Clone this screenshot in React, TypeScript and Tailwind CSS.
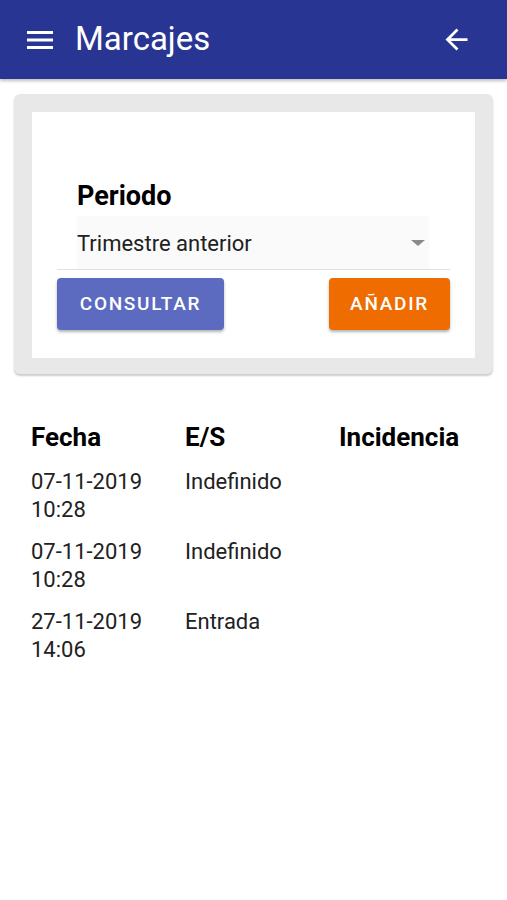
import React from "react";

const rows = [
  { date: "07-11-2019", time: "10:28", es: "Indefinido", inc: "" },
  { date: "07-11-2019", time: "10:28", es: "Indefinido", inc: "" },
  { date: "27-11-2019", time: "14:06", es: "Entrada", inc: "" },
];

const App = () => {
  return (
    <div className="min-h-[900px] bg-white font-['Roboto',sans-serif]">
      {/* header */}
      <div className="h-[79px] bg-[#283593] flex items-center pl-[27px] pr-[34px] shadow-[0_2px_3px_rgba(0,0,0,0.25)]">
        <svg width="26" height="20" viewBox="0 0 26 20" className="shrink-0">
          <rect x="0" y="1" width="26" height="3" fill="white" />
          <rect x="0" y="8.5" width="26" height="3" fill="white" />
          <rect x="0" y="16" width="26" height="3" fill="white" />
        </svg>
        <h1 className="ml-[22px] text-white text-[33px] leading-none pb-[2px]">Marcajes</h1>
        <svg width="33" height="33" viewBox="0 0 24 24" className="ml-auto">
          <path d="M20 11H7.83l5.59-5.59L12 4l-8 8 8 8 1.41-1.41L7.83 13H20v-2z" fill="white" />
        </svg>
      </div>

      {/* filter card */}
      <div className="mx-[14px] mt-[15px] bg-[#e8e8e8] rounded-[6px] p-[18px] pb-[16px] shadow-[0_2px_2px_rgba(0,0,0,0.2)]">
        <div className="bg-white h-[246px] px-[25px] pt-[71px]">
          <div className="text-[27px] font-bold text-black leading-none pl-[20px]">Periodo</div>
          <div className="mt-[6px] border-b border-[#e0e0e0]">
            <div className="ml-[20px] mr-[21px] h-[53px] bg-[#fafafa] flex items-center justify-between pr-[4px]">
              <span className="text-[22px] text-[#212121] pt-[2px]">Trimestre anterior</span>
              <span className="w-0 h-0 border-l-[7px] border-r-[7px] border-t-[6px] border-l-transparent border-r-transparent border-t-[#8a8a8a]" />
            </div>
          </div>
          <div className="flex justify-between mt-[8px]">
            <button className="h-[52px] w-[167px] rounded-[4px] bg-[#5c6bc0] text-white text-[19px] font-medium tracking-[1.7px] shadow-[0_2px_3px_rgba(0,0,0,0.3)]">
              CONSULTAR
            </button>
            <button className="h-[52px] w-[121px] rounded-[4px] bg-[#ef6c00] text-white text-[19px] font-medium tracking-[1.7px] shadow-[0_2px_3px_rgba(0,0,0,0.3)]">
              AÑADIR
            </button>
          </div>
        </div>
      </div>

      {/* table */}
      <div className="mt-[48px] px-[31px] text-black">
        <div className="grid grid-cols-[154px_154px_1fr] text-[26px] font-bold leading-[30px]">
          <div>Fecha</div>
          <div>E/S</div>
          <div>Incidencia</div>
        </div>
        <div className="mt-[16px] flex flex-col gap-[14px]">
          {rows.map((r, i) => (
            <div key={i} className="grid grid-cols-[154px_154px_1fr] text-[22px] leading-[28px] text-[#212121]">
              <div>
                {r.date}
                <br />
                {r.time}
              </div>
              <div>{r.es}</div>
              <div>{r.inc}</div>
            </div>
          ))}
        </div>
      </div>
    </div>
  );
};

export default App;
